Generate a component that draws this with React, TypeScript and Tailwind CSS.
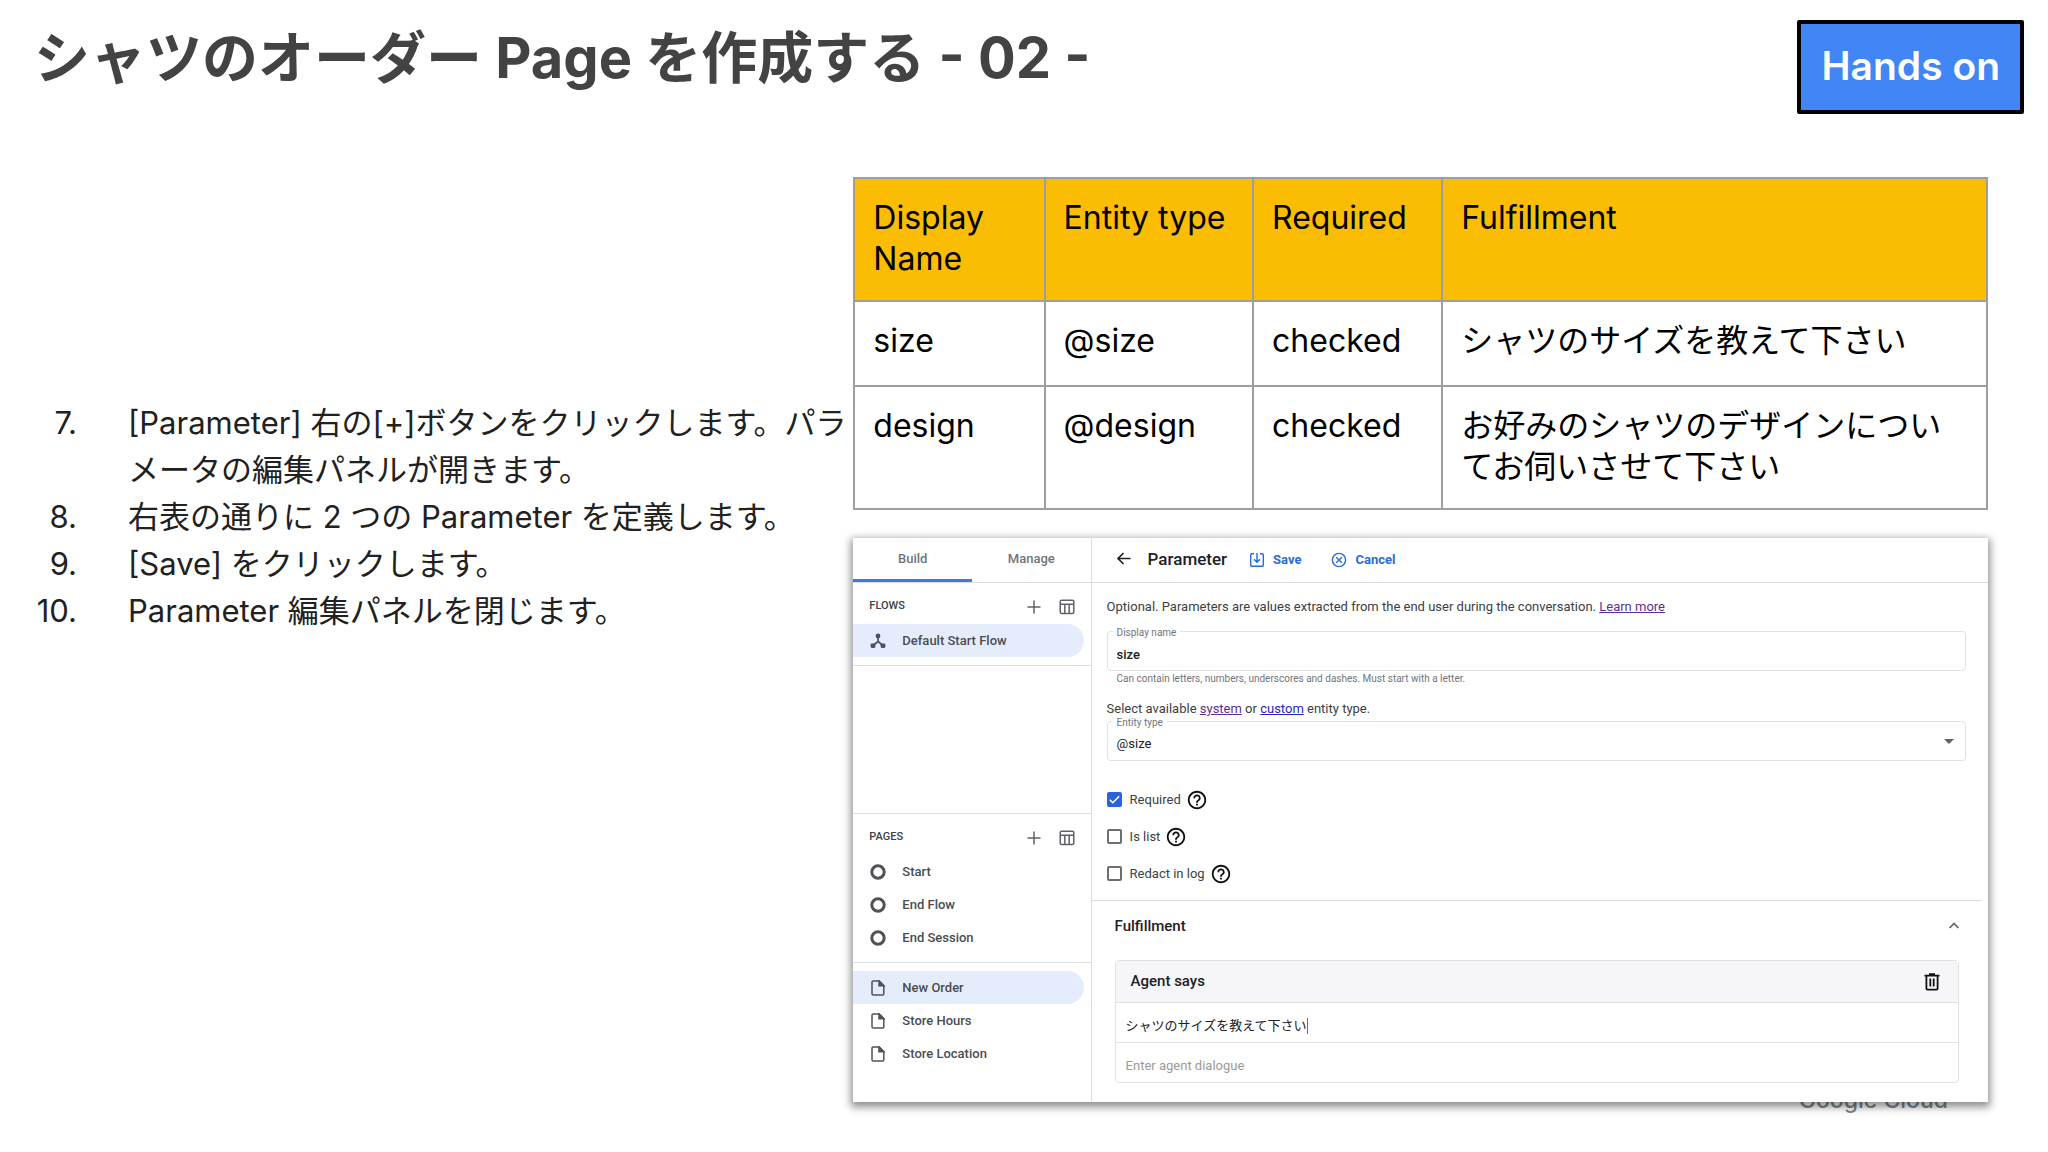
import { useState, type ReactNode } from "react";

const steps = [
	"[Parameter] 右の[+]ボタンをクリックします。パラメータの編集パネルが開きます。",
	"右表の通りに 2 つの Parameter を定義します。",
	"[Save] をクリックします。",
	"Parameter 編集パネルを閉じます。",
];

const parameters = [
	["size", "@size", "checked", "シャツのサイズを教えて下さい"],
	["design", "@design", "checked", "お好みのシャツのデザインについてお伺いさせて下さい"],
];

function PlusIcon() {
	return (
		<svg viewBox="0 0 14 14" className="size-3.5" fill="none" stroke="#5f6368" strokeWidth="1.5">
			<path d="M7 .5v13M.5 7h13" />
		</svg>
	);
}

function TableIcon() {
	return (
		<svg viewBox="0 0 16 16" className="size-4" fill="none" stroke="#5f6368" strokeWidth="1.5">
			<rect x="1.2" y="1.2" width="13.6" height="13.2" rx="1.5" />
			<path d="M1 5.2h14M5.8 5.2v9M10.2 5.2v9" />
		</svg>
	);
}

function FlowIcon() {
	return (
		<svg viewBox="0 0 16 16" className="size-4" fill="#4b5160" stroke="#4b5160">
			<path d="M8 3v5.5L3 12.5M8 8.5l5 4" fill="none" strokeWidth="1.7" />
			<circle cx="8" cy="3" r="2.4" stroke="none" />
			<rect x=".6" y="10.4" width="4.8" height="4.6" rx="1.4" stroke="none" />
			<rect x="10.6" y="10.4" width="4.8" height="4.6" rx="1.4" stroke="none" />
		</svg>
	);
}

function CircleIcon() {
	return (
		<svg viewBox="0 0 16 16" className="size-4" fill="none" stroke="#4f5256" strokeWidth="3">
			<circle cx="8" cy="8" r="6.2" />
		</svg>
	);
}

function FileIcon() {
	return (
		<svg viewBox="0 0 16 16" className="size-4" fill="none" stroke="#4f5256" strokeWidth="1.5">
			<path d="M3.4.9h5.8l4.6 4.6v8.2a1.4 1.4 0 0 1-1.4 1.4H3.4A1.4 1.4 0 0 1 2 13.7V2.3A1.4 1.4 0 0 1 3.4.9z" />
			<path d="M9 1v4.8h4.8z" fill="#4f5256" />
		</svg>
	);
}

function HelpIcon() {
	return (
		<svg viewBox="0 0 24 24" className="size-[22px]" fill="#111">
			<path d="M11 18h2v-2h-2v2zm1-16C6.48 2 2 6.48 2 12s4.48 10 10 10 10-4.48 10-10S17.52 2 12 2zm0 18c-4.41 0-8-3.59-8-8s3.59-8 8-8 8 3.59 8 8-3.59 8-8 8zm0-14c-2.21 0-4 1.79-4 4h2c0-1.1.9-2 2-2s2 .9 2 2c0 2-3 1.75-3 5h2c0-2.25 3-2.5 3-5 0-2.21-1.79-4-4-4z" />
		</svg>
	);
}

function SectionTitle({ title }: { title: string }) {
	return (
		<div className="flex h-[41px] items-center pt-1.5 pr-4 pl-4">
			<h3 className="flex-1 text-[11px] font-medium text-[#3c4043]">{title}</h3>
			<button type="button" aria-label={`Add ${title}`}>
				<PlusIcon />
			</button>
			<button type="button" aria-label={`Manage ${title}`} className="ml-[18px]">
				<TableIcon />
			</button>
		</div>
	);
}

function NavItem({ icon, label, active }: { icon: ReactNode; label: string; active?: boolean }) {
	return (
		<li className="pr-[7px]">
			<a
				href="#"
				className={`flex h-[33px] items-center gap-4 rounded-r-full pl-[17px] text-[13px] font-medium text-[#4a4d51] ${active ? "bg-[#e5ecfc]" : ""}`}
			>
				{icon}
				{label}
			</a>
		</li>
	);
}

function CheckRow({ id, label, initial }: { id: string; label: string; initial?: boolean }) {
	const [checked, setChecked] = useState(!!initial);

	return (
		<div className="flex h-[37px] items-center">
			<span className="relative flex size-[15px]">
				<input
					id={id}
					type="checkbox"
					checked={checked}
					onChange={() => setChecked(!checked)}
					className="size-[15px] appearance-none rounded-xs border-2 border-[#6b6e72] checked:border-[#2962d9] checked:bg-[#2962d9]"
				/>
				{checked && (
					<svg viewBox="0 0 15 15" className="pointer-events-none absolute inset-0" fill="none" stroke="#fff" strokeWidth="1.5">
						<path d="M2.8 7.8l3 3 6.4-6.6" />
					</svg>
				)}
			</span>
			<label htmlFor={id} className="pr-[5px] pl-2 text-[13px] text-[#3c4043]">
				{label}
			</label>
			<HelpIcon />
		</div>
	);
}

export default function App() {
	return (
		<main className="relative flex min-h-screen flex-col bg-white font-['Inter','Noto_Sans_CJK_JP',sans-serif] text-[#212121]">
			{/* HEADER */}
			<header className="flex h-[177px] items-start justify-between pt-5 pr-6 pl-[34px]">
				<h1 className="text-[56px] leading-[76px] font-bold text-[#434343]">
					シャツのオーダー Page を作成する - 02 -
				</h1>
				<div className="flex h-[94px] items-center rounded-xs border-4 border-black bg-[#4285f4] px-5 pb-0.5 text-[39px] font-semibold text-white">
					Hands on
				</div>
			</header>

			<div className="grid grid-cols-[5fr_7fr]">
				{/* STEPS */}
				<ol start={7} className="pt-[222px] text-[31px] leading-[47px]">
					{steps.map((step, index) => (
						<li key={step} className="flex gap-[51px]">
							<span className="w-[77px] shrink-0 text-right">{index + 7}.</span>
							<span className="flex-1">{step}</span>
						</li>
					))}
				</ol>

				<div className="pr-[60px]">
					{/* PARAMETER TABLE */}
					<table className="w-full table-fixed border-collapse text-left text-[32px] leading-[41px] text-black">
						<thead>
							<tr className="h-[123px] bg-[#fbbc04]">
								<th className="w-[16.8%] border-2 border-[#9e9e9e] px-[18px] pt-[18px] align-top font-normal">Display Name</th>
								<th className="w-[18.4%] border-2 border-[#9e9e9e] px-[18px] pt-[18px] align-top font-normal whitespace-nowrap">Entity type</th>
								<th className="w-[16.7%] border-2 border-[#9e9e9e] px-[18px] pt-[18px] align-top font-normal">Required</th>
								<th className="border-2 border-[#9e9e9e] px-[18px] pt-[18px] align-top font-normal">Fulfillment</th>
							</tr>
						</thead>
						<tbody>
							{parameters.map((row) => (
								<tr key={row[0]} className="h-[85px] last:h-[123px]">
									{row.map((cell) => (
										<td key={cell} className="border-2 border-[#9e9e9e] px-[18px] pt-[18px] align-top">
											{cell}
										</td>
									))}
								</tr>
							))}
						</tbody>
					</table>

					{/* CONSOLE */}
					<section className="relative z-10 mt-7 flex min-h-[564px] bg-white font-['Roboto','Noto_Sans_CJK_JP',sans-serif] text-[13px] text-[#3c4043] shadow-[0_3px_8px_2px_rgba(0,0,0,0.45)]">
						<nav className="flex w-[21%] flex-col border-r border-[#dadce0]">
							<div className="flex h-[45px] border-b border-[#dadce0] font-medium text-[#70757a]">
								<button type="button" className="flex-1 border-b-3 border-[#3f7bd0]">Build</button>
								<button type="button" className="flex-1 border-b-3 border-transparent">Manage</button>
							</div>
							<SectionTitle title="FLOWS" />
							<ul>
								<NavItem icon={<FlowIcon />} label="Default Start Flow" active />
							</ul>
							<div className="mt-2 h-[149px] border-y border-[#dadce0]" />
							<SectionTitle title="PAGES" />
							<ul>
								<NavItem icon={<CircleIcon />} label="Start" />
								<NavItem icon={<CircleIcon />} label="End Flow" />
								<NavItem icon={<CircleIcon />} label="End Session" />
							</ul>
							<ul className="mt-2 border-t border-[#dadce0] pt-2">
								<NavItem icon={<FileIcon />} label="New Order" active />
								<NavItem icon={<FileIcon />} label="Store Hours" />
								<NavItem icon={<FileIcon />} label="Store Location" />
							</ul>
						</nav>

						<form className="flex flex-1 flex-col" onSubmit={(e) => e.preventDefault()}>
							<div className="flex h-[45px] items-center border-b border-[#dadce0] pl-6">
								<button type="button" aria-label="Back">
									<svg viewBox="0 0 16 16" className="size-4" fill="none" stroke="#202124" strokeWidth="1.7">
										<path d="M14.5 6.5H2M7.5 1l-5.5 5.5 5.5 5.5" />
									</svg>
								</button>
								<h2 className="pr-[22px] pl-4 text-[17px] font-medium text-[#202124]">Parameter</h2>
								<button type="submit" className="flex items-center gap-2 font-bold text-[#2a6bd8]">
									<svg viewBox="0 0 16 16" className="size-4" fill="none" stroke="#2a6bd8" strokeWidth="1.4">
										<path d="M5 1.7H2.9a1.2 1.2 0 0 0-1.2 1.2v10.2a1.2 1.2 0 0 0 1.2 1.2h10.2a1.2 1.2 0 0 0 1.2-1.2V2.9a1.2 1.2 0 0 0-1.2-1.2H11M8 1v9M5 7.2l3 3 3-3" />
									</svg>
									Save
								</button>
								<button type="button" className="ml-[30px] flex items-center gap-2 font-bold text-[#2a6bd8]">
									<svg viewBox="0 0 16 16" className="size-4" fill="none" stroke="#2a6bd8" strokeWidth="1.4">
										<circle cx="8" cy="8" r="6.6" />
										<path d="M5.2 5.2l5.6 5.6M10.8 5.2l-5.6 5.6" />
									</svg>
									Cancel
								</button>
							</div>

							<div className="flex flex-col pt-4 pr-[22px] pl-[15px]">
								<p className="leading-4">
									Optional. Parameters are values extracted from the end user during the conversation.{" "}
									<a href="#" className="text-[#5b2f91] underline">Learn more</a>
								</p>
								<div className="relative mt-4">
									<label htmlFor="display-name" className="absolute -top-1 left-1.5 bg-white px-1 text-[10px] leading-3 text-[#70757a]">
										Display name
									</label>
									<input
										id="display-name"
										defaultValue="size"
										className="h-10 w-full rounded border border-[#dfe1e5] px-[9px] pt-1.5 font-medium text-[#202124]"
									/>
								</div>
								<p className="pl-2.5 text-[10px] leading-4 text-[#70757a]">
									Can contain letters, numbers, underscores and dashes. Must start with a letter.
								</p>
								<p className="mt-3.5 leading-4">
									Select available <a href="#" className="text-[#5b2f91] underline">system</a> or{" "}
									<a href="#" className="text-[#2a24c4] underline">custom</a> entity type.
								</p>
								<div className="relative mt-1">
									<label htmlFor="entity-type" className="absolute -top-1 left-1.5 bg-white px-1 text-[10px] leading-3 text-[#70757a]">
										Entity type
									</label>
									<select
										id="entity-type"
										className="h-10 w-full appearance-none rounded border border-[#dfe1e5] px-[9px] pt-1.5 text-[#202124]"
									>
										<option>@size</option>
									</select>
									<svg viewBox="0 0 10 5" className="pointer-events-none absolute top-[18px] right-3 h-[5px] w-2.5" fill="#5f6368">
										<path d="M0 0h10L5 5z" />
									</svg>
								</div>
							</div>

							<div className="mt-5 mr-1.5 border-b border-[#dadce0] pb-2 pl-[15px]">
								<CheckRow id="required" label="Required" initial />
								<CheckRow id="is-list" label="Is list" />
								<CheckRow id="redact" label="Redact in log" />
							</div>

							<div className="pt-[15px] pr-[29px] pl-[23px]">
								<div className="flex h-5 items-center justify-between">
									<h3 className="text-[15px] font-medium text-[#202124]">Fulfillment</h3>
									<button type="button" aria-label="Collapse" className="pb-0.5">
										<svg viewBox="0 0 10 7" className="h-[7px] w-2.5" fill="none" stroke="#5f6368" strokeWidth="1.7">
											<path d="M.6 6L5 1.5 9.4 6" />
										</svg>
									</button>
								</div>
								<div className="mt-6 rounded border border-[#dfe1e5]">
									<div className="flex h-[41px] items-center justify-between bg-[#f6f5f8] pr-[18px] pl-[15px]">
										<h4 className="text-[15px] font-medium text-[#202124]">Agent says</h4>
										<button type="button" aria-label="Delete">
											<svg viewBox="0 0 16 18" className="h-[18px] w-4" fill="none" stroke="#111" strokeWidth="1.8">
												<path d="M.5 2.6h15M5 1.2h6M2.4 3v12.6a1 1 0 0 0 1 1h9.2a1 1 0 0 0 1-1V3" />
												<path d="M6.3 5.5v8M9.7 5.5v8" />
											</svg>
										</button>
									</div>
									<div className="flex h-10 items-center border-t border-[#dfe1e5] pt-1.5 pl-2.5 text-[#202124]">
										<span>シャツのサイズを教えて下さい</span>
										<span className="h-4 w-px bg-[#4a6fa5]" />
									</div>
									<input
										aria-label="Enter agent dialogue"
										placeholder="Enter agent dialogue"
										className="h-10 w-full border-t border-[#dfe1e5] px-2.5 pt-1.5 placeholder:text-[#9a9a9a]"
									/>
								</div>
							</div>
						</form>
					</section>
				</div>
			</div>

			{/* Brand line, partly covered by the console */}
			<p className="absolute right-[100px] bottom-9 text-[23px] leading-8 font-medium text-[#80868b]">Google Cloud</p>
		</main>
	);
}
